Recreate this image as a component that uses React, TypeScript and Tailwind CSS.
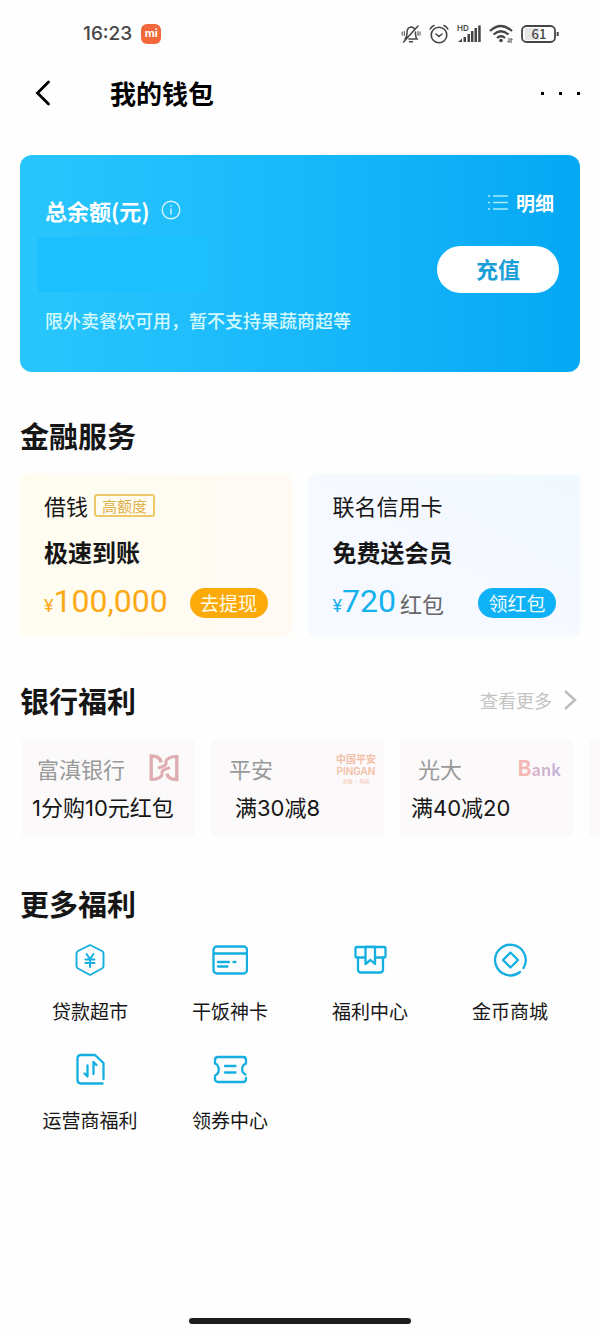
import React from 'react';

interface Bank {
  name: string;
  offer: string;
  headClass: string;
  offerClass: string;
  logo: React.ReactNode;
}

interface Benefit {
  label: string;
  icon: React.ReactNode;
}

const FudianLogo: React.FC = () => (
  <svg width="30" height="30" viewBox="0 0 30 30" fill="none" stroke="#dfadb0" strokeWidth="3.400">
    <path d="M2.200 27.500 V3 C8 3 11.500 5 12 9.500" />
    <path d="M27.800 2 V26.500 C22 26.500 18.500 25 18 20.500" />
    <path d="M27.800 3.200 C19 4 16.500 7 17 10 C17.500 13 14 13.500 9 15" strokeWidth="3" />
    <path d="M2.200 26.500 C11 26 13.500 23 13 20 C12.500 17 16 16 21 14.500" strokeWidth="3" />
  </svg>
);

const PinganLogo: React.FC = () => (
  <span className="flex w-[44px] flex-col items-center whitespace-nowrap text-[#f3bfa6]">
    <span className="text-[10px] leading-[12px] font-bold">中国平安</span>
    <span className="font-['Inter',sans-serif] text-[10px] leading-[13px] font-semibold">PINGAN</span>
    <span className="text-[5px] leading-[6px]">金融 · 科技</span>
  </span>
);

const BankLogo: React.FC = () => (
  <span className="flex items-baseline">
    <span className="text-[21px] leading-[28px] font-bold text-[#f4b9b4]">B</span>
    <span className="bg-linear-to-r from-[#d9b3c6] to-[#c3b2dd] bg-clip-text text-[16px] leading-[28px] font-bold text-transparent">ank</span>
  </span>
);

const banks: Bank[] = [
  { name: '富滇银行', offer: '1分购10元红包', headClass: 'pl-[15px] pr-4', offerClass: 'pl-[10px]', logo: <FudianLogo /> },
  { name: '平安', offer: '满30减8', headClass: 'pl-[18px] pr-[6px]', offerClass: 'pl-6', logo: <PinganLogo /> },
  { name: '光大', offer: '满40减20', headClass: 'pl-[18px] pr-[12px]', offerClass: 'pl-[11px]', logo: <BankLogo /> },
];

const IconFrame: React.FC<{ children: React.ReactNode }> = ({ children }) => (
  <svg
    width="36"
    height="36"
    viewBox="0 0 36 36"
    fill="none"
    stroke="#14aee0"
    strokeWidth="2.300"
    strokeLinecap="round"
    strokeLinejoin="round"
  >
    {children}
  </svg>
);

const benefits: Benefit[] = [
  {
    label: '贷款超市',
    icon: (
      <IconFrame>
        <path d="M18 3 L30 9 Q31.500 10 31.500 11.500 V24 Q31.500 25.500 30 26.500 L18 33 L6 26.500 Q4.500 25.500 4.500 24 V11.500 Q4.500 10 6 9 Z" strokeWidth="1.900" />
        <path d="M14.500 12 L18 17 L21.500 12 M18 17 V25 M13.500 17.500 H22.500 M13.500 21 H22.500" strokeWidth="2" />
      </IconFrame>
    ),
  },
  {
    label: '干饭神卡',
    icon: (
      <IconFrame>
        <rect x="1.500" y="4.500" width="33.500" height="27" rx="3.500" />
        <path d="M2 11.500 H34.500 M6 20 H17 M21.500 20 H23.500 M6 24.500 H15.500" />
      </IconFrame>
    ),
  },
  {
    label: '福利中心',
    icon: (
      <IconFrame>
        <rect x="3.500" y="5" width="30" height="10.500" rx="1.500" />
        <path d="M6 15.500 V27.500 Q6 30.500 9 30.500 H28 Q31 30.500 31 27.500 V15.500" />
        <path d="M13.500 5 V22 L18.500 18 L23 22 V5 Z" fill="#fefefe" />
      </IconFrame>
    ),
  },
  {
    label: '金币商城',
    icon: (
      <IconFrame>
        <path d="M28 30 A15.300 15.300 0 1 1 31.500 26" />
        <path d="M18.500 10.500 L26 18 L18.500 25.500 L11 18 Z" />
      </IconFrame>
    ),
  },
  {
    label: '运营商福利',
    icon: (
      <IconFrame>
        <path d="M31.500 28 V12 L23 4 H9 Q5.500 4 5.500 7.500 V29 Q5.500 32.500 9 32.500 H30.500" />
        <path d="M15.500 14.500 V25.500 L12.500 22.500 M21.500 23 V11 L24.500 14" />
      </IconFrame>
    ),
  },
  {
    label: '领券中心',
    icon: (
      <IconFrame>
        <path d="M34 27 V28 Q34 31 31 31 H6 Q3 31 3 28 V24.500 C8 22.500 8 14.500 3 12.500 V9 Q3 6 6 6 H31 Q34 6 34 9 V12.500 C29 14.500 29 21.500 33.500 23.500" />
        <path d="M13 15 H23.500 M13 21.500 H23.500" />
      </IconFrame>
    ),
  },
];

const StatusBar: React.FC = () => (
  <div className="flex h-[68px] items-center justify-between pr-10 pl-[83px] text-[#454545]">
    <div className="flex items-center gap-[9px]">
      <span className="font-['Inter',sans-serif] text-[19px] leading-6 font-medium">16:23</span>
      <span className="flex h-5 w-5 items-center justify-center rounded-[6px] bg-[#f2683a] pb-px font-['Inter',sans-serif] text-[11px] leading-none font-bold text-white">
        mi
      </span>
    </div>
    <div className="flex items-center gap-[8px]">
      <svg width="20" height="20" viewBox="0 0 20 20" fill="none" stroke="currentColor" strokeWidth="1.500" strokeLinecap="round">
        <path d="M4 15 Q6 13 6 10 V8 Q6 4 10 3 Q12.500 3 13.500 5 M14.500 8 V10 Q14.500 13 16 15 H8 M8.500 17.800 H11.500 M2.500 18 L17 2" />
        <path d="M1.200 8 V11 M3.300 7.500 V11.500 M17 7.500 V11.500 M19 8 V11" strokeWidth="1" />
      </svg>
      <svg width="20" height="20" viewBox="0 0 20 20" fill="none" stroke="currentColor" strokeWidth="1.600" strokeLinecap="round" strokeLinejoin="round">
        <circle cx="10" cy="11" r="7.800" />
        <path d="M7 10 L10 12.500 L13 10 M1.200 5 Q2.500 2.500 5 1.500 M15 1.500 Q17.500 2.500 18.800 5" />
      </svg>
      <svg width="24" height="20" viewBox="0 0 24 20" fill="currentColor">
        <text x="0" y="7" fontSize="8" fontWeight="600" fontFamily="Inter, sans-serif">HD</text>
        <path d="M1 18 L5 14.500 V18 Z M6.500 13 H9 V18 H6.500 Z M10.500 10 H13 V18 H10.500 Z M14 7 H16.500 V18 H14 Z M17.500 4 H20 V18 H17.500 Z M21.200 1.500 H23.700 V18 H21.200 Z" />
      </svg>
      <svg width="24" height="20" viewBox="0 0 24 20" fill="none" stroke="currentColor" strokeWidth="2.200">
        <path d="M1 7 Q12 -3 23 7 M4.500 10.500 Q12 4 19.500 10.500 M8 14 Q12 10.500 16 14" />
        <circle cx="12" cy="16.500" r="1.800" fill="currentColor" stroke="none" />
        <path d="M20 14 V18.500 L18.500 17 M22 19 V14.500 L23.500 16" strokeWidth="1" />
      </svg>
      <svg width="39" height="18" viewBox="0 0 39 18">
        <rect x="4" y="3" width="14" height="12" fill="#e6e6e6" />
        <rect x="1" y="1" width="33" height="16" rx="4.500" fill="none" stroke="currentColor" strokeWidth="1.800" />
        <path d="M36.700 7 V11" stroke="currentColor" strokeWidth="2" />
        <text x="18" y="13.500" fontSize="13" fontWeight="500" textAnchor="middle" fill="currentColor" fontFamily="Noto Sans CJK SC, sans-serif">61</text>
      </svg>
    </div>
  </div>
);

const SectionTitle: React.FC<{ children: React.ReactNode }> = ({ children }) => (
  <h2 className="text-[29px] leading-10 font-bold">{children}</h2>
);

const App: React.FC = () => {
  return (
    <div className="flex min-h-screen flex-col overflow-hidden bg-[#fefefe] font-['Noto_Sans_CJK_SC',sans-serif] text-[#161616]">
      <StatusBar />

      <header className="flex h-[50px] items-center pr-5 pl-[34px] text-black">
        <button aria-label="返回">
          <svg width="18" height="28" viewBox="0 0 18 28" fill="none" stroke="currentColor" strokeWidth="2.800" strokeLinecap="round">
            <path d="M14.500 3 L3.500 14 L14.500 25" />
          </svg>
        </button>
        <h1 className="ml-[58px] flex-1 text-[26px] leading-9 font-bold">我的钱包</h1>
        <button aria-label="更多" className="flex gap-[15px] py-3">
          <span className="h-[3px] w-[3px] bg-current" />
          <span className="h-[3px] w-[3px] bg-current" />
          <span className="h-[3px] w-[3px] bg-current" />
        </button>
      </header>

      <main className="pt-[37px]">
        <section className="mx-5 flex justify-between rounded-xl bg-linear-to-r from-[#29c6fd] via-[#18b8fb] to-[#04a8f3] pr-[21px] pl-[25px] text-white">
          <div className="pt-[39px] pb-9">
            <div className="flex items-center gap-[11px] text-[22px] leading-8 font-bold">
              <span>总余额(元)</span>
              <svg width="20" height="20" viewBox="0 0 20 20" fill="none" stroke="#d5f6ff" strokeWidth="1.400">
                <circle cx="10" cy="10" r="8.800" />
                <path d="M10 8.500 V14.500 M10 5.300 V6.800" />
              </svg>
            </div>
            <div className="mt-[11px] -ml-[7px] h-[55px] w-[170px] bg-[#1dc0ff]" />
            <p className="mt-3 text-[18px] leading-8 font-medium text-[#d3f8fe]">限外卖餐饮可用，暂不支持果蔬商超等</p>
          </div>
          <div className="flex flex-col items-end pt-8">
            <a href="#detail" className="mr-[5px] flex items-center gap-[7px] text-[19px] leading-8 font-bold">
              <svg width="22" height="18" viewBox="0 0 22 18" fill="none" stroke="#a9eafc" strokeWidth="1.700">
                <path d="M1 2 H3 M6 2 H21 M1 8.500 H3 M6 8.500 H21 M1 15 H3 M6 15 H21" />
              </svg>
              明细
            </a>
            <button className="mt-[27px] h-[47px] w-[122px] rounded-full bg-white pb-[2px] text-[22px] font-bold text-[#1a9fd8]">充值</button>
          </div>
        </section>

        <section className="mt-[43px] px-5">
          <SectionTitle>金融服务</SectionTitle>
          <div className="mt-5 grid grid-cols-2 gap-[17px]">
            <div className="rounded-md bg-linear-to-r from-[#fffdf0] to-[#fffaf4] pt-[14px] pr-6 pb-[17px] pl-6 shadow-[0_0_5px_#fffdee]">
              <div className="flex items-center gap-[6px] text-[22px] leading-8">
                <span>借钱</span>
                <span className="rounded-[3px] border-2 border-[#ecc867] px-[6px] text-[15px] leading-[19px] text-[#dfb149]">高额度</span>
              </div>
              <h3 className="mt-[15px] text-[24px] leading-8 font-bold">极速到账</h3>
              <div className="mt-[19px] flex h-8 items-center justify-between">
                <p className="flex items-baseline font-['Roboto',sans-serif] text-[32px] leading-8 text-[#fba914]">
                  <span className="text-[18px]">¥</span>100,000
                </p>
                <button className="h-[30px] w-[78px] rounded-full bg-[#fcaa0a] pb-[2px] text-[19px] leading-none text-[#fffbe8]">去提现</button>
              </div>
            </div>
            <div className="rounded-md bg-linear-to-bl from-[#f0f9ff] via-[#f6f9ff] to-[#f6f9ff] pt-[14px] pr-6 pb-[17px] pl-6 shadow-[0_0_5px_#f3fbff]">
              <div className="text-[22px] leading-8">联名信用卡</div>
              <h3 className="mt-[15px] text-[24px] leading-8 font-bold">免费送会员</h3>
              <div className="mt-[19px] flex h-8 items-center justify-between">
                <div className="flex items-center gap-1">
                  <p className="flex items-baseline font-['Roboto',sans-serif] text-[32px] leading-8 text-[#13b2ee]">
                    <span className="text-[18px]">¥</span>720
                  </p>
                  <span className="text-[22px] leading-8 text-[#666]">红包</span>
                </div>
                <button className="h-[30px] w-[78px] rounded-full bg-[#0fb1f7] pb-[2px] text-[19px] leading-none text-[#edfcff]">领红包</button>
              </div>
            </div>
          </div>
        </section>

        <section className="mt-11">
          <div className="flex items-center justify-between pr-[22px] pl-5">
            <SectionTitle>银行福利</SectionTitle>
            <a href="#banks" className="flex items-center gap-[10px] text-[18px] leading-8 text-[#c4c4c4]">
              查看更多
              <svg width="16" height="22" viewBox="0 0 16 22" fill="none" stroke="#bdbdbd" strokeWidth="2.400">
                <path d="M3 2 L13 11 L3 20" />
              </svg>
            </a>
          </div>
          <div className="mt-5 flex gap-4 overflow-hidden pl-[22px]">
            {banks.map((bank) => (
              <div key={bank.name} className="w-[173px] shrink-0 bg-[#fbf9fa] pt-[13px] pb-[13px]">
                <div className={`flex h-[30px] items-center justify-between text-[22px] leading-[30px] text-[#999] ${bank.headClass}`}>
                  <span>{bank.name}</span>
                  {bank.logo}
                </div>
                <div className={`mt-[10px] font-['Inter','Noto_Sans_CJK_SC',sans-serif] text-[22px] leading-[30px] whitespace-nowrap ${bank.offerClass}`}>
                  {bank.offer}
                </div>
              </div>
            ))}
            <div className="w-[173px] shrink-0 bg-[#fbf9fa]" />
          </div>
        </section>

        <section className="mt-[47px] px-5">
          <SectionTitle>更多福利</SectionTitle>
          <div className="mt-[19px] grid grid-cols-4 gap-y-[26px]">
            {benefits.map((item) => (
              <a key={item.label} href="#benefit" className="flex flex-col items-center gap-[19px] text-[19px] leading-7">
                {item.icon}
                <span>{item.label}</span>
              </a>
            ))}
          </div>
        </section>
      </main>

      <div className="mx-auto mt-auto mb-[9px] h-[6px] w-[222px] rounded-full bg-[#1d1d1d]" />
    </div>
  );
};

export default App;
